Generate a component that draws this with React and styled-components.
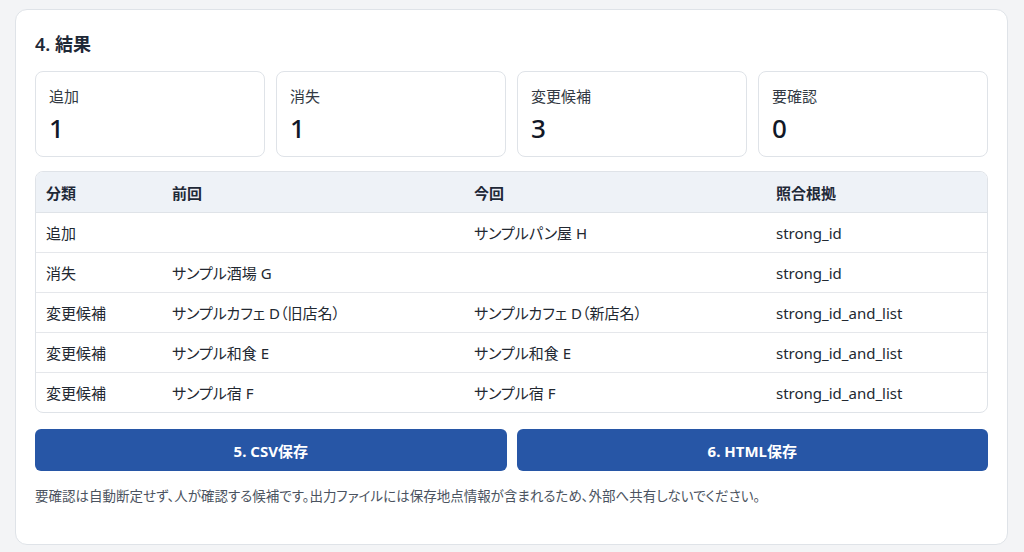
import React from 'react';
import styled, { createGlobalStyle } from 'styled-components';

const GlobalStyle = createGlobalStyle`
  html, body {
    margin: 0;
    padding: 0;
    background: #f3f4f6;
    font-family: "Noto Sans", "Noto Sans CJK JP", sans-serif;
    font-feature-settings: "palt";
    color: #1f2937;
  }
`;

const stats = [
  { label: '追加', value: 1 },
  { label: '消失', value: 1 },
  { label: '変更候補', value: 3 },
  { label: '要確認', value: 0 },
];

const rows = [
  ['追加', '', 'サンプルパン屋 H', 'strong_id'],
  ['消失', 'サンプル酒場 G', '', 'strong_id'],
  ['変更候補', 'サンプルカフェ D（旧店名）', 'サンプルカフェ D（新店名）', 'strong_id_and_list'],
  ['変更候補', 'サンプル和食 E', 'サンプル和食 E', 'strong_id_and_list'],
  ['変更候補', 'サンプル宿 F', 'サンプル宿 F', 'strong_id_and_list'],
];

const App = () => {
  return (
    <>
      <GlobalStyle />
      <Page>
        <Panel>
          <Title>4. 結果</Title>
          <StatGrid>
            {stats.map((s) => (
              <StatCard key={s.label}>
                <StatLabel>{s.label}</StatLabel>
                <StatValue>{s.value}</StatValue>
              </StatCard>
            ))}
          </StatGrid>
          <TableWrap>
            <Table>
              <colgroup>
                <col style={{ width: 126 }} />
                <col style={{ width: 302 }} />
                <col style={{ width: 302 }} />
                <col />
              </colgroup>
              <thead>
                <tr>
                  <Th>分類</Th>
                  <Th>前回</Th>
                  <Th>今回</Th>
                  <Th>照合根拠</Th>
                </tr>
              </thead>
              <tbody>
                {rows.map((r, i) => (
                  <Tr key={i}>
                    {r.map((c, j) => (
                      <Td key={j}>{c}</Td>
                    ))}
                  </Tr>
                ))}
              </tbody>
            </Table>
          </TableWrap>
          <Actions>
            <SaveButton>5. CSV保存</SaveButton>
            <SaveButton>6. HTML保存</SaveButton>
          </Actions>
          <Note>
            要確認は自動断定せず、人が確認する候補です。出力ファイルには保存地点情報が含まれるため、外部へ共有しないでください。
          </Note>
        </Panel>
      </Page>
    </>
  );
};

const Page = styled.div`
  padding: 9px 16px 8px 15px;
`;

const Panel = styled.section`
  box-sizing: border-box;
  height: 536px;
  background: #ffffff;
  border: 1px solid #dfe3e8;
  border-radius: 12px;
  padding: 20px 19px 20px 19px;
`;

const Title = styled.h2`
  margin: 0 0 13px;
  font-size: 18px;
  line-height: 28px;
  font-weight: 600;
  color: #1f2937;
`;

const StatGrid = styled.div`
  display: grid;
  grid-template-columns: repeat(4, 1fr);
  gap: 11px;
`;

const StatCard = styled.div`
  box-sizing: border-box;
  height: 86px;
  border: 1px solid #dfe3e8;
  border-radius: 8px;
  padding: 13px 13px;
`;

const StatLabel = styled.div`
  font-size: 15px;
  line-height: 22px;
  color: #333a44;
`;

const StatValue = styled.div`
  margin-top: 4px;
  font-size: 26px;
  line-height: 34px;
  font-weight: 500;
  color: #111827;
`;

const TableWrap = styled.div`
  margin-top: 14px;
  border: 1px solid #dfe3e8;
  border-radius: 8px;
  overflow: hidden;
`;

const Table = styled.table`
  width: 100%;
  border-collapse: collapse;
  table-layout: fixed;
  font-size: 15px;
`;

const Th = styled.th`
  height: 40px;
  padding: 0 10px;
  text-align: left;
  font-weight: 700;
  background: #eef2f7;
  color: #1f2937;
  border-bottom: 1px solid #dfe3e8;
`;

const Tr = styled.tr`
  &:not(:last-child) td {
    border-bottom: 1px solid #e5e7eb;
  }
`;

const Td = styled.td`
  height: 39px;
  padding: 0 10px;
  color: #222831;
  white-space: nowrap;
`;

const Actions = styled.div`
  display: grid;
  grid-template-columns: 1fr 1fr;
  gap: 10px;
  margin-top: 16px;
`;

const SaveButton = styled.button`
  height: 42px;
  border: none;
  border-radius: 6px;
  background: #2756a6;
  color: #ffffff;
  font-family: inherit;
  font-feature-settings: "palt";
  font-size: 15px;
  font-weight: 700;
  cursor: pointer;
  &:hover {
    background: #1f4a90;
  }
`;

const Note = styled.p`
  margin: 15px 0 0;
  font-size: 13.5px;
  line-height: 20px;
  color: #4b5360;
`;

export default App;
